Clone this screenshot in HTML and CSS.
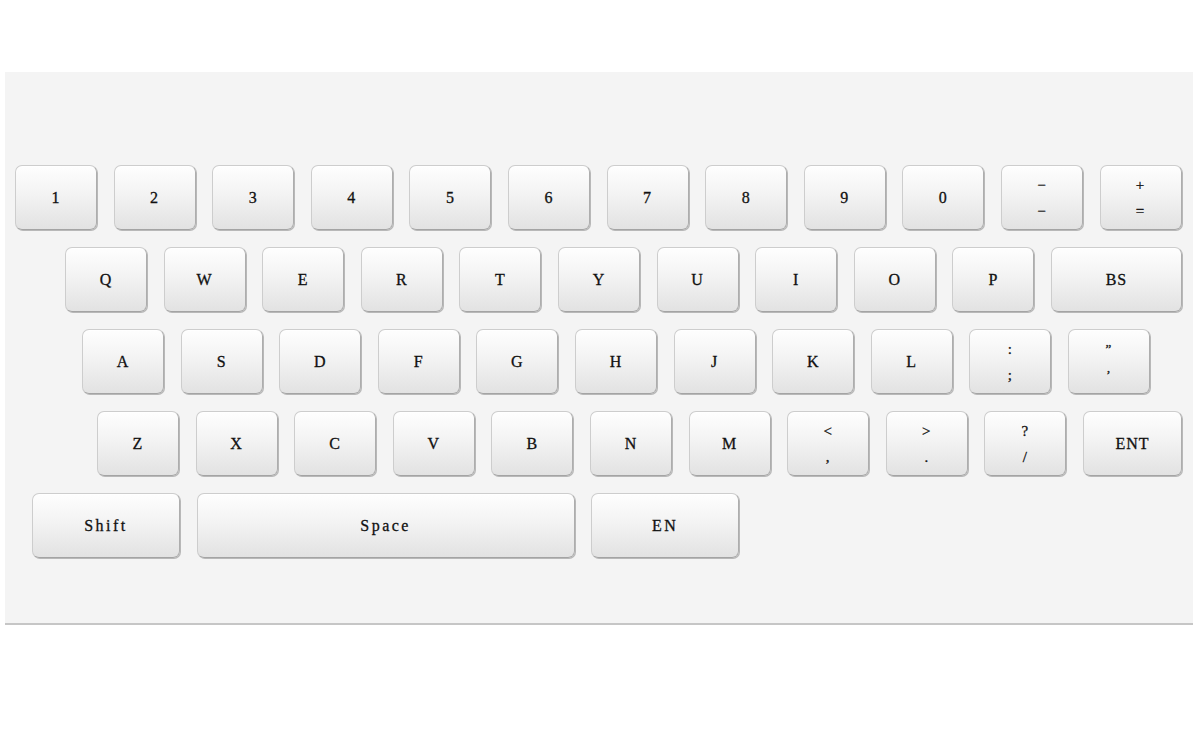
FILE: index.html
```html
<!DOCTYPE html>
<html lang="en">
<head>
    <meta charset="UTF-8">
    <meta name="viewport" content="width=device-width, initial-scale=1.0">
    <title>Keyboard</title>
    <link rel="stylesheet" href="styles.css">
</head>
<body>
    <div class="keyboard">
        <div class="row">
            <div class="key">1</div>
            <div class="key">2</div>
            <div class="key">3</div>
            <div class="key">4</div>
            <div class="key">5</div>
            <div class="key">6</div>
            <div class="key">7</div>
            <div class="key">8</div>
            <div class="key">9</div>
            <div class="key">0</div>
            <div class="key double"><span>&minus;</span><span>&minus;</span></div>
            <div class="key double"><span>+</span><span>=</span></div>
        </div>

        <div class="row row-2">
            <div class="key">Q</div>
            <div class="key">W</div>
            <div class="key">E</div>
            <div class="key">R</div>
            <div class="key">T</div>
            <div class="key">Y</div>
            <div class="key">U</div>
            <div class="key">I</div>
            <div class="key">O</div>
            <div class="key">P</div>
            <div class="key key-bs">BS</div>
        </div>

        <div class="row row-3">
            <div class="key">A</div>
            <div class="key">S</div>
            <div class="key">D</div>
            <div class="key">F</div>
            <div class="key">G</div>
            <div class="key">H</div>
            <div class="key">J</div>
            <div class="key">K</div>
            <div class="key">L</div>
            <div class="key double"><span>:</span><span>;</span></div>
            <div class="key double small"><span>&rdquo;</span><span>&rsquo;</span></div>
        </div>

        <div class="row row-4">
            <div class="key">Z</div>
            <div class="key">X</div>
            <div class="key">C</div>
            <div class="key">V</div>
            <div class="key">B</div>
            <div class="key">N</div>
            <div class="key">M</div>
            <div class="key double"><span>&lt;</span><span>,</span></div>
            <div class="key double"><span>&gt;</span><span>.</span></div>
            <div class="key double"><span>?</span><span>/</span></div>
            <div class="key key-ent">ENT</div>
        </div>

        <div class="row row-5">
            <div class="key key-wide">Shift</div>
            <div class="key key-space">Space</div>
            <div class="key key-wide">EN</div>
        </div>
    </div>
</body>
</html>
```

FILE: styles.css
```css
* {
    box-sizing: border-box;
    margin: 0;
    padding: 0;
}

body {
    background-color: #ffffff;
    font-family: 'Liberation Serif', 'DejaVu Serif', serif;
    color: #111111;
}

.keyboard {
    margin: 72px 7px 0 5px;
    height: 553px;
    background-color: #f4f4f4;
    border-bottom: 2px solid #c6c6c6;
    padding: 93px 0 0 10px;
}

.row {
    display: flex;
    gap: 16.6px;
    margin-bottom: 17px;
}

.row-2 {
    padding-left: 50px;
}

.row-3 {
    padding-left: 67px;
}

.row-4 {
    padding-left: 82px;
}

.row-5 {
    padding-left: 17px;
}

.key {
    width: 82px;
    height: 65px;
    flex-shrink: 0;
    display: flex;
    align-items: center;
    justify-content: center;
    font-size: 16px;
    letter-spacing: 1px;
    -webkit-text-stroke: 0.3px #111111;
    border: 1px solid #cdcdcd;
    border-bottom-color: #a4a4a4;
    border-right-color: #adadad;
    border-radius: 7px;
    background: linear-gradient(to bottom, #fefefe 0%, #f3f3f3 45%, #e2e2e2 100%);
    box-shadow: 1px 1px 0 #b8b8b8, inset 0 1px 0 #ffffff;
}

.double {
    flex-direction: column;
    gap: 8px;
    font-size: 15px;
    line-height: 18px;
}

.small {
    font-size: 13px;
}

.key-bs {
    width: 131px;
}

.key-ent {
    width: 99px;
}

.key-wide {
    width: 148px;
    letter-spacing: 2.5px;
}

.key-space {
    width: 378px;
    letter-spacing: 2.5px;
}
```
